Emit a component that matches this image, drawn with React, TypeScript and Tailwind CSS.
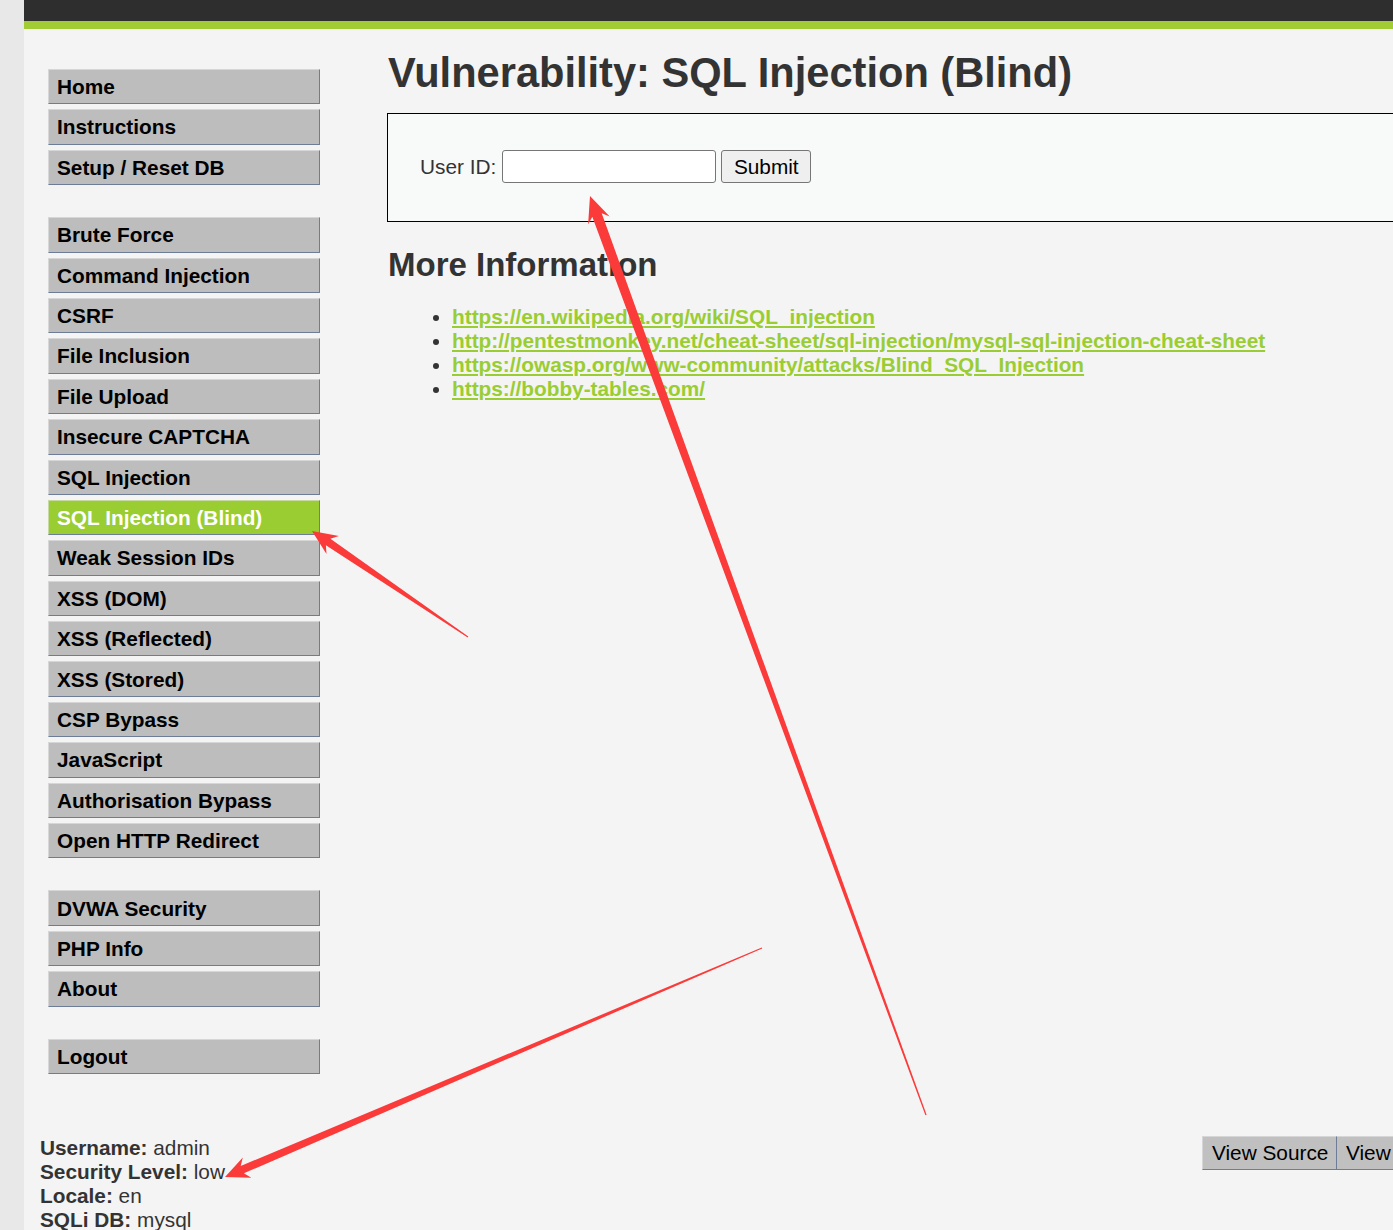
import React from "react";

const groups: string[][] = [
  ["Home", "Instructions", "Setup / Reset DB"],
  [
    "Brute Force",
    "Command Injection",
    "CSRF",
    "File Inclusion",
    "File Upload",
    "Insecure CAPTCHA",
    "SQL Injection",
    "SQL Injection (Blind)",
    "Weak Session IDs",
    "XSS (DOM)",
    "XSS (Reflected)",
    "XSS (Stored)",
    "CSP Bypass",
    "JavaScript",
    "Authorisation Bypass",
    "Open HTTP Redirect",
  ],
  ["DVWA Security", "PHP Info", "About"],
  ["Logout"],
];

const links = [
  "https://en.wikipedia.org/wiki/SQL_injection",
  "http://pentestmonkey.net/cheat-sheet/sql-injection/mysql-sql-injection-cheat-sheet",
  "https://owasp.org/www-community/attacks/Blind_SQL_Injection",
  "https://bobby-tables.com/",
];

function arrowPoints(
  tx: number,
  ty: number,
  px: number,
  py: number,
  L: number,
  H: number,
  w: number,
  tw: number
): string {
  const dx = tx - px;
  const dy = ty - py;
  const len = Math.sqrt(dx * dx + dy * dy);
  const ux = dx / len;
  const uy = dy / len;
  const nx = -uy;
  const ny = ux;
  const pts: [number, number][] = [
    [px, py],
    [px + ux * L + nx * H, py + uy * L + ny * H],
    [px + ux * L * 0.78 + nx * w, py + uy * L * 0.78 + ny * w],
    [tx + nx * tw, ty + ny * tw],
    [tx - nx * tw, ty - ny * tw],
    [px + ux * L * 0.78 - nx * w, py + uy * L * 0.78 - ny * w],
    [px + ux * L - nx * H, py + uy * L - ny * H],
  ];
  return pts.map((p) => `${p[0].toFixed(1)},${p[1].toFixed(1)}`).join(" ");
}

function MenuItem({ label }: { label: string }) {
  const active = label === "SQL Injection (Blind)";
  return (
    <div
      className={
        active
          ? "h-[35.4px] mb-[5px] shrink-0 flex items-center pl-[8px] bg-[#9acd32] text-white font-bold text-[20.8px] border-t border-l border-[#c6d9a0] border-r border-b border-r-[#6e7d97] border-b-[#6e7d97] whitespace-nowrap"
          : "h-[35.4px] mb-[5px] shrink-0 flex items-center pl-[8px] bg-[#bdbdbd] text-black font-bold text-[20.8px] border-t border-l border-[#d6d6d6] border-r border-b border-r-[#6e7d97] border-b-[#6e7d97] whitespace-nowrap"
      }
    >
      {label}
    </div>
  );
}

export default function App() {
  return (
    <div
      className="relative w-[1393px] h-[1230px] overflow-hidden flex bg-[#f4f4f4] text-[#333]"
      style={{ fontFamily: '"Liberation Sans", Arial, sans-serif' }}
    >
      <div className="w-[24px] shrink-0 h-full bg-[#e8e8e8]" />
      <div className="flex-1 min-w-0 flex flex-col">
        <div className="h-[21px] shrink-0 bg-[#2e2e2e]" />
        <div className="h-[8px] shrink-0 bg-[#a2cc34]" />
        <div className="flex shrink-0">
          <div className="w-[296px] shrink-0 pl-[24px] pt-[40px] flex flex-col">
            {groups.map((g, gi) => (
              <div key={gi} className="flex flex-col mb-[27px] last:mb-0">
                {g.map((l) => (
                  <MenuItem key={l} label={l} />
                ))}
              </div>
            ))}
          </div>
          <div className="ml-[68px] flex-1 min-w-0 pt-[20px]">
            <h1 className="text-[41.6px] leading-[47px] font-bold text-[#333] whitespace-nowrap">
              Vulnerability: SQL Injection (Blind)
            </h1>
            <div className="mt-[17px] -ml-[1px] w-[1100px] h-[109px] border border-black bg-[#f8f9f9] flex items-center pl-[32px] pb-[2px] text-[20.8px]">
              <span className="text-[#333]">User ID:</span>
              <div className="ml-[6px] w-[214px] h-[33px] bg-white border border-[#767676] rounded-[3px]" />
              <div className="ml-[5px] w-[90px] h-[33px] bg-[#efefef] border border-[#767676] rounded-[3px] flex items-center justify-center text-black">
                Submit
              </div>
            </div>
            <h2 className="mt-[24px] text-[33px] leading-[38px] font-bold text-[#333] whitespace-nowrap">
              More Information
            </h2>
            <ul className="mt-[21px] pl-[64px] list-disc text-[20.8px] leading-[24px] marker:text-[#333]">
              {links.map((l) => (
                <li key={l} className="whitespace-nowrap">
                  <span className="font-bold text-[#9acd32] underline">{l}</span>
                </li>
              ))}
            </ul>
          </div>
        </div>
        <div className="mt-[57px] flex pl-[16px] shrink-0">
          <div className="w-[1162px] shrink-0 text-[20.8px] leading-[24px] text-[#333]">
            <div>
              <b>Username:</b> admin
            </div>
            <div>
              <b>Security Level:</b> low
            </div>
            <div>
              <b>Locale:</b> en
            </div>
            <div>
              <b>SQLi DB:</b> mysql
            </div>
          </div>
          <div className="flex shrink-0 text-[20.8px] text-black whitespace-nowrap">
            <div className="w-[135px] h-[34px] flex items-center pl-[9px] bg-[#c0c0c0] border-t border-l border-[#d6d6d6] border-r border-b border-r-[#6e7d97] border-b-[#6e7d97]">
              View Source
            </div>
            <div className="w-[120px] h-[34px] flex items-center pl-[9px] bg-[#c0c0c0] border-t border-[#d6d6d6] border-b border-b-[#6e7d97]">
              View Help
            </div>
          </div>
        </div>
      </div>
      <svg
        className="absolute left-0 top-0 pointer-events-none"
        width={1393}
        height={1230}
        viewBox="0 0 1393 1230"
      >
        <polygon fill="#fb3a3a" points={arrowPoints(468, 637, 312, 531, 25, 11, 4, 0.5)} />
        <polygon fill="#fb3a3a" points={arrowPoints(926, 1115, 590, 196, 26, 11.5, 5, 0.6)} />
        <polygon fill="#fb3a3a" points={arrowPoints(762, 948, 225, 1177, 24, 11, 4, 0.5)} />
      </svg>
    </div>
  );
}
